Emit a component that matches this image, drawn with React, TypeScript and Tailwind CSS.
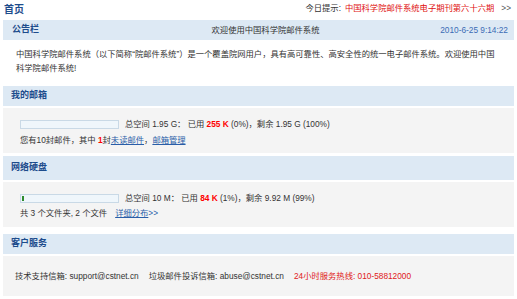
import React from "react";

function PanelHeader({ title, children }: { title: string; children?: React.ReactNode }) {
  return (
    <div className="flex h-[20px] items-center bg-[#dde9f4] pl-[8px] pr-[8px]">
      <span className="text-[9px] font-bold text-[#1d4c8c]">{title}</span>
      {children}
    </div>
  );
}

function Bar({ used }: { used?: boolean }) {
  return (
    <span className="relative inline-block h-[9px] w-[99px] border border-[#c9d9e6] bg-[#eff6fb]">
      {used && <span className="absolute left-[1px] top-[1px] h-[5px] w-[2px] bg-[#2e8b2e]" />}
    </span>
  );
}

export default function App() {
  return (
    <div className="h-[299px] w-[517px] overflow-hidden bg-white font-['Liberation_Sans','Noto_Sans_CJK_SC',sans-serif] text-[8.3px] text-[#333]">
      {/* 顶部 */}
      <div className="flex h-[20px] items-start justify-between px-[4px] pt-[2px]">
        <span className="text-[10px] font-bold text-[#1d4c8c]">首页</span>
        <span className="flex items-center gap-[4px] pr-[2px]">
          <span>今日提示:</span>
          <span className="text-[#e01010]">中国科学院邮件系统电子期刊第六十六期</span>
          <span className="ml-[3px] text-[#555]">&gt;&gt;</span>
        </span>
      </div>

      {/* 公告栏 */}
      <section className="mx-[3px]">
        <div className="flex h-[20px] items-center bg-[#dde9f4]">
          <span className="w-[94px] pl-[9px] text-[9px] font-bold text-[#1d4c8c]">公告栏</span>
          <span className="flex-1 text-center text-[#333]">欢迎使用中国科学院邮件系统</span>
          <span className="w-[80px] pr-[6px] text-right text-[#3b6cb5]">2010-6-25 9:14:22</span>
        </div>
        <div className="mt-[1px] h-[39px] px-[13px] pt-[6px] leading-[14px]">
          中国科学院邮件系统（以下简称“院邮件系统”）是一个覆盖院网用户，具有高可靠性、高安全性的统一电子邮件系统。欢迎使用中国科学院邮件系统!
        </div>
      </section>

      {/* 我的邮箱 */}
      <section className="mx-[3px] mt-[6px]">
        <PanelHeader title="我的邮箱" />
        <div className="mt-[2px] flex h-[45px] flex-col gap-[2px] bg-[#f4f4f4] pl-[17px] pt-[9px] leading-[14px]">
          <div className="flex items-center gap-[6px]">
            <Bar />
            <span>
              总空间 1.95 G： 已用 <b className="text-[#ff0000]">255 K</b> (0%)，剩余 1.95 G (100%)
            </span>
          </div>
          <div>
            您有10封邮件，其中 <b className="text-[#ff0000]">1</b>封
            <a className="text-[#2a5ea8] underline">未读邮件</a>，
            <a className="text-[#2a5ea8] underline">邮箱管理</a>
          </div>
        </div>
      </section>

      {/* 网络硬盘 */}
      <section className="mx-[3px] mt-[3px]">
        <div className="flex h-[24px] items-center bg-[#dde9f4] pl-[8px]">
          <span className="text-[9px] font-bold text-[#1d4c8c]">网络硬盘</span>
        </div>
        <div className="mt-[2px] flex h-[45px] flex-col gap-[1px] bg-[#f4f4f4] pl-[17px] pt-[9px] leading-[14px]">
          <div className="flex items-center gap-[6px]">
            <Bar used />
            <span>
              总空间 10 M： 已用 <b className="text-[#ff0000]">84 K</b> (1%)，剩余 9.92 M (99%)
            </span>
          </div>
          <div>
            共 3 个文件夹, 2 个文件
            <a className="ml-[8px] text-[#2a5ea8] underline">详细分布</a>
            <span className="text-[#2a5ea8]">&gt;&gt;</span>
          </div>
        </div>
      </section>

      {/* 客户服务 */}
      <section className="mx-[3px] mt-[7px]">
        <PanelHeader title="客户服务" />
        <div className="mt-[2px] flex h-[40px] items-center gap-[10px] bg-[#f4f4f4] pl-[12px]">
          <span>技术支持信箱: support@cstnet.cn</span>
          <span>垃圾邮件投诉信箱: abuse@cstnet.cn</span>
          <span className="text-[#e02020]">24小时服务热线: 010-58812000</span>
        </div>
      </section>
    </div>
  );
}
